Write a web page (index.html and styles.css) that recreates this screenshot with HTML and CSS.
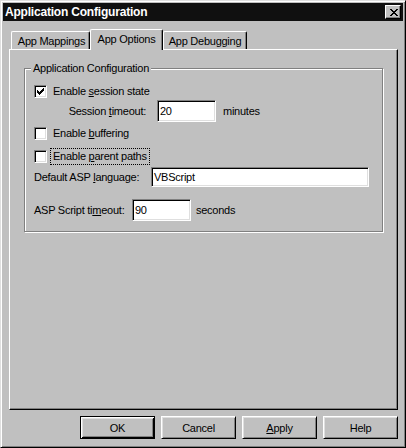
FILE: index.html
```html
<!doctype html>
<html>
<head>
	<meta charset="utf-8">
	<link rel="stylesheet" href="styles.css">
</head>
<body>

<div class="window">

	<div class="titlebar">
		<span class="title">Application Configuration</span>
		<span class="close">
			<svg width="8" height="7" viewBox="0 0 8 7" shape-rendering="crispEdges">
				<path fill="#000" d="M0 0h2v1h-2zM6 0h2v1h-2zM1 1h2v1h-2zM5 1h2v1h-2zM2 2h4v1h-4zM3 3h2v1h-2zM2 4h4v1h-4zM1 5h2v1h-2zM5 5h2v1h-2zM0 6h2v1h-2zM6 6h2v1h-2z"/>
			</svg>
		</span>
	</div>

	<div class="tabs">
		<div class="tab tab-first">App Mappings</div>
		<div class="tab active">App Options</div>
		<div class="tab tab-last">App Debugging</div>
	</div>

	<div class="panel">
		<div class="group">
			<span class="legend">Application Configuration</span>

			<div class="row row1">
				<span class="check checked">
					<svg width="7" height="7" viewBox="0 0 7 7" shape-rendering="crispEdges">
						<path fill="#000" d="M0 2h1v3h-1zM1 3h1v3h-1zM2 4h1v3h-1zM3 3h1v3h-1zM4 2h1v3h-1zM5 1h1v3h-1zM6 0h1v3h-1z"/>
					</svg>
				</span>
				<span class="label">Enable <u>s</u>ession state</span>
			</div>

			<div class="row row2">
				<span class="field-label lbl-session">Session <u>t</u>imeout:</span>
				<span class="input input-short">20</span>
				<span class="unit unit-minutes">minutes</span>
			</div>

			<div class="row row3">
				<span class="check"></span>
				<span class="label">Enable <u>b</u>uffering</span>
			</div>

			<div class="row row4">
				<span class="check"></span>
				<span class="label focus">Enable <u>p</u>arent paths</span>
			</div>

			<div class="row row5">
				<span class="field-label lbl-language">Default ASP <u>l</u>anguage:</span>
				<span class="input input-long">VBScript</span>
			</div>

			<div class="row row6">
				<span class="field-label lbl-script">ASP Script ti<u>m</u>eout:</span>
				<span class="input input-short">90</span>
				<span class="unit unit-seconds">seconds</span>
			</div>
		</div>
	</div>

	<div class="buttons">
		<div class="btn default">OK</div>
		<div class="btn">Cancel</div>
		<div class="btn"><u>A</u>pply</div>
		<div class="btn">Help</div>
	</div>

</div>

</body>
</html>
```

FILE: styles.css
```css
html, body { margin: 0; padding: 0; background: #c0c0c0; }
body { font: 11px "Liberation Sans", Arial, sans-serif; color: #000; letter-spacing: -0.25px; }
u { text-decoration: underline; text-underline-offset: 1px; }

.window { box-sizing: border-box; width: 406px; height: 448px; padding: 2px; display: flex; flex-direction: column;
	border: 1px solid; border-color: #dfdfdf #000 #000 #dfdfdf;
	box-shadow: inset 1px 1px #fff, inset -1px -1px #808080; background: #c0c0c0; }

.titlebar { height: 18px; background: #101010; color: #fff; display: flex; align-items: center; padding: 0 2px 0 2px; }
.title { font: bold 12px "Liberation Sans", Arial, sans-serif; letter-spacing: -0.2px; flex: 1; }
.close { box-sizing: border-box; width: 16px; height: 14px; background: #c0c0c0; display: flex; align-items: center; justify-content: center;
	border: 1px solid; border-color: #fff #000 #000 #fff; box-shadow: inset -1px -1px #808080; padding-left: 1px; }

.tabs { display: flex; align-items: flex-end; height: 20px; margin-top: 8px; padding-left: 8px; }
.tab { box-sizing: border-box; height: 18px; padding: 0; display: flex; align-items: center; justify-content: center; white-space: nowrap;
	border: 1px solid; border-color: #fff #000 transparent #fff; border-bottom: 0; border-radius: 2px 2px 0 0;
	box-shadow: inset -1px 0 #808080; background: #c0c0c0; }
.tab-first { width: 79px; padding-left: 2px; }
.tab.active { height: 21px; margin-bottom: -1px; position: relative; z-index: 1; width: 73px; padding-bottom: 3px; }
.tab-last { width: 84px; }

.panel { box-sizing: border-box; height: 361px; margin: 0 5px 0 6px; padding-top: 18px;
	border: 1px solid; border-color: #fff #000 #000 #fff; box-shadow: inset -1px -1px #808080; }

.group { box-sizing: border-box; width: 359px; height: 164px; margin-left: 14px; padding: 0 9px 10px 9px;
	display: flex; flex-direction: column;
	border: 1px solid #808080; box-shadow: inset 1px 1px #fff, 1px 1px #fff; }
.legend { align-self: flex-start; height: 13px; line-height: 13px; margin: -7px 0 0 -3px; padding: 0 2px; background: #c0c0c0; }

.row { display: flex; align-items: center; }
.row1 { height: 17px; margin-top: 8px; }
.row2 { height: 22px; }
.row3 { height: 17px; margin-top: 3px; }
.row4 { height: 17px; margin-top: 6px; }
.row5 { height: 20px; margin-top: 2px; }
.row6 { height: 22px; margin-top: 12px; }

.check { box-sizing: border-box; width: 13px; height: 13px; background: #fff; display: flex; align-items: center; justify-content: center;
	border: 1px solid; border-color: #808080 #fff #fff #808080; box-shadow: inset 1px 1px #000, inset -1px -1px #dfdfdf; }
.label { margin-left: 3px; padding: 1px 2px 2px 2px; border: 1px dotted transparent; }
.label.focus { border-color: #000; }

.field-label { display: block; }
.lbl-session { width: 112px; text-align: right; }
.lbl-language { width: 117px; }
.lbl-script { width: 98px; }

.input { box-sizing: border-box; height: 100%; background: #fff; display: flex; align-items: center; padding-left: 2px; margin-left: 11px;
	border: 1px solid; border-color: #808080 #fff #fff #808080; box-shadow: inset 1px 1px #000, inset -1px -1px #dfdfdf; }
.lbl-language + .input, .lbl-script + .input { margin-left: 0; }
.input-short { width: 59px; }
.input-long { width: 218px; }
.unit-minutes { margin-left: 7px; }
.unit-seconds { margin-left: 5px; }

.buttons { display: flex; justify-content: flex-end; gap: 6px; margin: 6px 5px 0 0; }
.btn { box-sizing: border-box; width: 75px; height: 23px; display: flex; align-items: center; justify-content: center;
	border: 1px solid; border-color: #fff #000 #000 #fff; box-shadow: inset 1px 1px #dfdfdf, inset -1px -1px #808080; }
.btn.default { border-color: #000; box-shadow: inset 1px 1px #fff, inset -1px -1px #000, inset 2px 2px #dfdfdf, inset -2px -2px #808080; }
```
